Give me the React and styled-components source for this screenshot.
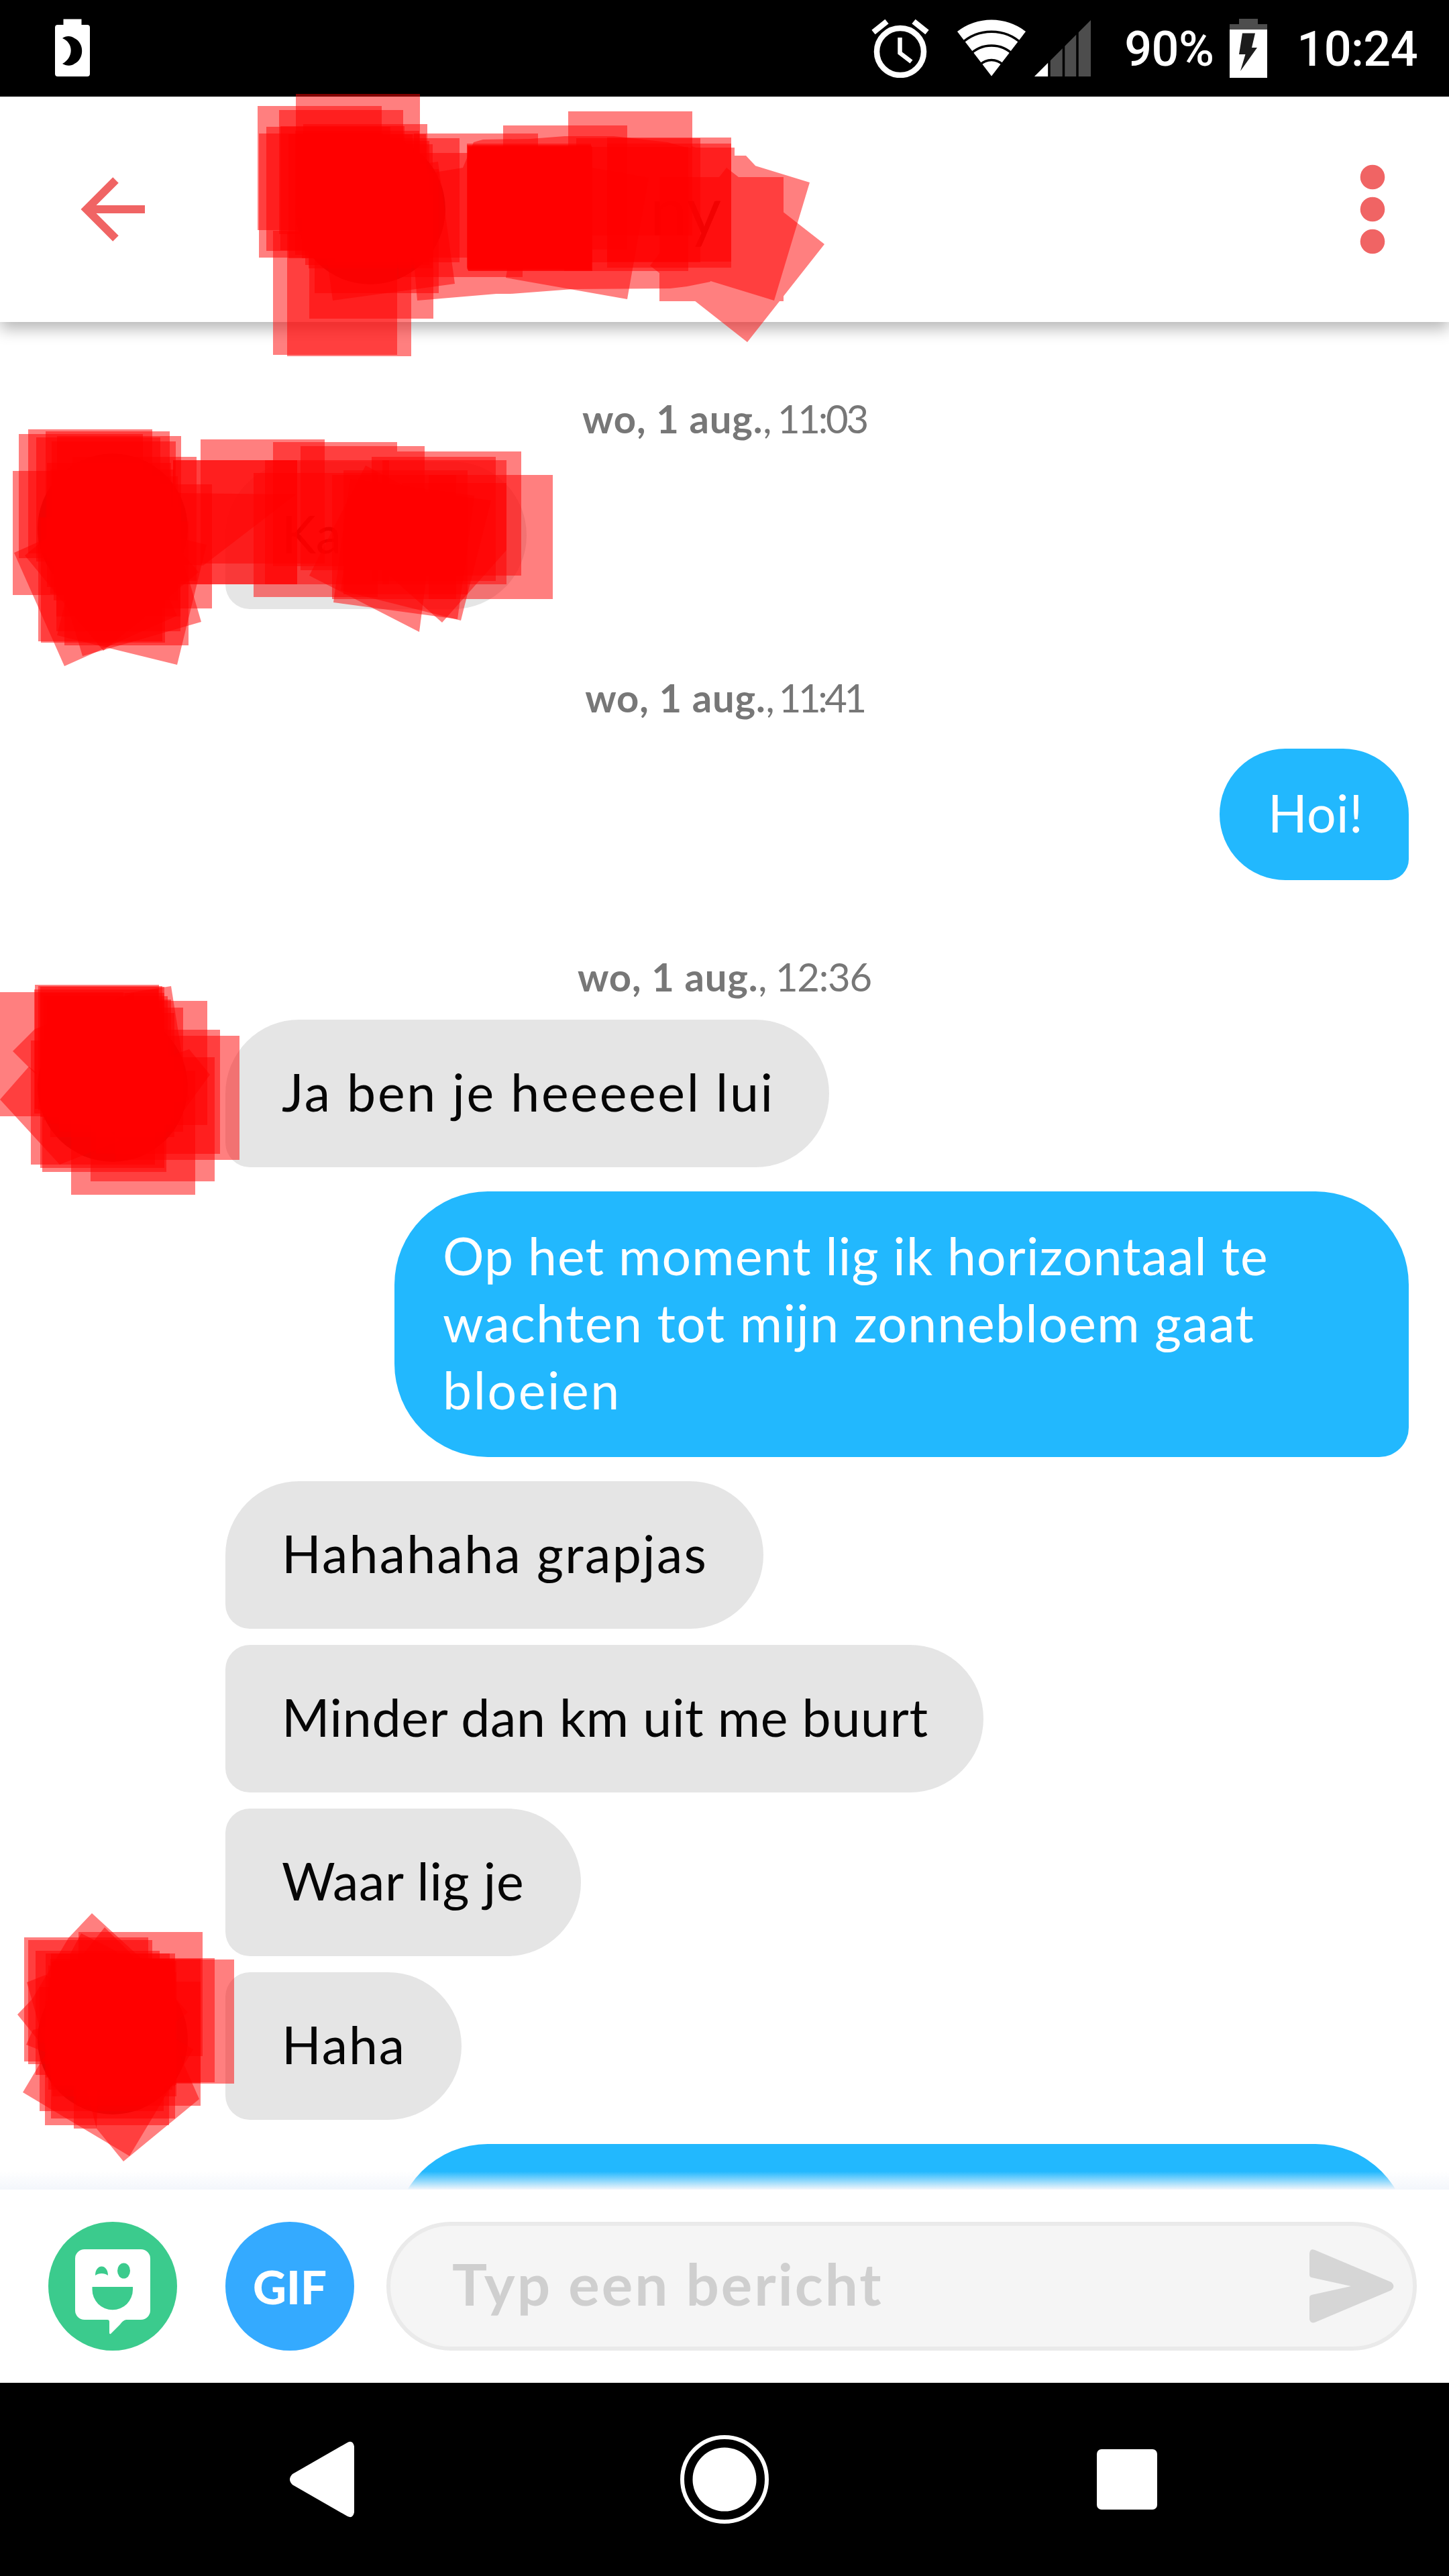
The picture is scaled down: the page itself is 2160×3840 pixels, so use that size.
import React from 'react';
import styled, { createGlobalStyle } from 'styled-components';

const GlobalStyle = createGlobalStyle`
  * {
    box-sizing: border-box;
  }

  body {
    margin: 0;
    background: #fff;
    font-family: Lato, 'Open Sans', sans-serif;
  }
`;

const Screen = styled.div`
  position: relative;
  display: flex;
  flex-direction: column;
  width: 2160px;
  height: 3840px;
  overflow: hidden;
  background: #fff;
`;

const StatusBar = styled.div`
  display: flex;
  align-items: center;
  flex: none;
  height: 144px;
  padding: 0 47px 0 82px;
  background: #000;
  color: #fff;
  font-family: Roboto, sans-serif;
  font-size: 72px;
  font-weight: 500;
  line-height: 144px;
`;

const StatusIcon = styled.svg`
  display: block;
  flex: none;
  width: ${(p) => p.$w}px;
  height: 88px;
  margin-left: ${(p) => p.$left || 0}px;
`;

const StatusText = styled.span`
  margin-left: ${(p) => p.$left}px;
  padding-top: 3px;
  letter-spacing: -0.6px;
`;

const Spacer = styled.div`
  flex: 1;
`;

const Header = styled.header`
  display: flex;
  align-items: center;
  flex: none;
  height: 336px;
  padding: 0 95px 0 120px;
  background: #fff;
  box-shadow: 0 10px 22px rgba(0, 0, 0, 0.29);
  z-index: 1;
`;

const BackIcon = styled.svg`
  width: 96px;
  height: 96px;
  margin-right: 224px;
`;

const Avatar = styled.div`
  flex: none;
  width: 224px;
  height: 224px;
  border-radius: 50%;
  background: #4a3b36;
`;

const Name = styled.div`
  width: 411px;
  text-align: right;
  font-size: 100px;
  line-height: 120px;
  color: #222;
`;

const MenuIcon = styled.svg`
  width: 38px;
  height: 134px;
`;

const Messages = styled.main`
  position: relative;
  display: flex;
  flex-direction: column;
  flex: 1;
  gap: 24px;
  min-height: 0;
  padding-top: 36px;
  overflow: hidden;

  & > * {
    flex: none;
  }
`;

const Fade = styled.div`
  position: absolute;
  left: 0;
  right: 0;
  bottom: 0;
  height: 27px;
  background: linear-gradient(rgba(243, 246, 251, 0), #f3f6fb);
`;

const DateLine = styled.div`
  margin: 72px 0 4px;
  text-align: center;
  font-size: 58px;
  line-height: 72px;
  letter-spacing: ${(p) => p.$tracking}px;
  color: #777;

  b {
    letter-spacing: 0.8px;
  }
`;

const Row = styled.div`
  display: flex;
  align-items: flex-end;
  justify-content: ${(p) => (p.$sent ? 'flex-end' : 'flex-start')};
  padding: ${(p) => (p.$sent ? '12px 60px 12px 0' : '0')};
`;

const AvatarSlot = styled.div`
  display: flex;
  align-items: flex-end;
  width: 336px;
  height: 220px;
  padding: 0 56px 8px;
`;

const Bubble = styled.div`
  width: ${(p) => p.$w}px;
  font-size: 77px;
  line-height: 100px;
  letter-spacing: ${(p) => p.$tracking || 0}px;
  white-space: pre;
`;

const SentBubble = styled(Bubble)`
  padding: 45px 0 51px 72px;
  border-radius: 139px 139px 44px 139px;
  background: #22b8fe;
  color: #fff;
`;

const ReceivedBubble = styled(Bubble)`
  padding: 57px 0 63px 84px;
  border-radius: ${(p) => (p.$follow ? 46 : 139)}px 139px 139px 46px;
  background: #e5e5e5;
  color: #060606;
`;

const Line = styled.div`
  letter-spacing: ${(p) => p.$tracking}px;
`;

const Composer = styled.footer`
  display: flex;
  align-items: center;
  flex: none;
  height: 288px;
  padding: 0 48px 0 72px;
  background: #fff;
`;

const RoundButton = styled.div`
  display: flex;
  align-items: center;
  justify-content: center;
  width: 192px;
  height: 192px;
  margin-right: ${(p) => p.$gap}px;
  border-radius: 50%;
  background: ${(p) => p.$color};
  color: #fff;
  font-size: 69px;
  font-weight: 900;
`;

const InputBox = styled.div`
  display: flex;
  align-items: center;
  justify-content: space-between;
  flex: 1;
  height: 192px;
  padding: 0 28px 0 92px;
  border: 6px solid #eaeaea;
  border-radius: 96px;
  background: #f5f5f5;
`;

const Placeholder = styled.span`
  padding-bottom: 8px;
  font-size: 87px;
  font-weight: 700;
  line-height: 100px;
  letter-spacing: 3px;
  color: #cfcfcf;
`;

const NavBar = styled.nav`
  display: grid;
  grid-template-columns: repeat(3, 600px);
  justify-content: center;
  align-items: center;
  justify-items: center;
  flex: none;
  height: 288px;
  background: #000;
`;

const Scribbles = styled.svg`
  position: absolute;
  top: 0;
  left: 0;
  width: 2160px;
  height: 3840px;
  z-index: 2;
  pointer-events: none;
`;

// top left corners of the marker stamps
const STAMP = 185;

const stamps = [
  // header
  [441, 140], [384, 158], [416, 164], [397, 189], [386, 199], [418, 188], [452, 185],
  [407, 344], [428, 346], [461, 290], [469, 252], [500, 206], [617, 199], [594, 228],
  [750, 187], [847, 166], [859, 206], [905, 205], [905, 214],
  [696, 214], [696, 216], [697, 217], [698, 219], [698, 219], [697, 218],
  [430, 200], [440, 195], [450, 200], [455, 210], [460, 215], [841, 219],
  // first bubble
  [42, 640], [68, 643], [28, 647], [85, 650], [54, 652], [77, 658], [19, 702],
  [108, 681], [131, 722], [258, 686], [258, 686], [299, 655], [407, 659], [448, 665],
  [592, 673], [554, 681], [570, 686], [395, 686], [378, 705], [512, 701], [495, 708],
  [639, 708], [57, 771], [61, 773], [84, 756], [84, 734], [96, 777],
  [70, 690], [75, 700], [80, 710],
  // "Ja ben je"
  [-1, 1479], [52, 1468], [57, 1470], [51, 1475], [60, 1471], [124, 1492], [143, 1535],
  [172, 1544], [135, 1576], [106, 1596], [63, 1562], [60, 1556], [88, 1502], [46, 1551],
  [60, 1480], [65, 1485], [70, 1490], [75, 1510],
  // "Haha"
  [36, 2888], [117, 2880], [135, 2919], [164, 2921], [53, 2908], [68, 2912], [76, 2912],
  [78, 2923], [114, 2954], [59, 2962], [67, 2983], [76, 2973], [42, 2892], [114, 2920],
  [75, 2920], [72, 2930], [78, 2940], [76, 2925],
];

// longer drags, every one a single flat shape
const drags = [
  'M606 264L690 250L706 212L720 208L790 207L842 203L915 203L995 212L1030 222L1059 420L1024 427L999 430L854 431L761 438L740 438L622 448z M1207 272L1154 448L978 394L1031 218z M910 220H1095V405H910z M1080 232H1112L1126 247V300H1080z',
  'M983 264H1168V449H983z M1229 364L1114 510L969 396L1083 250z',
];

const tilted = [
  '935,446 754,414 786,233 967,265',
  '496,448 678,423 653,241 471,266',
  '21,824 96,993 264,918 189,749',
  '264,991 85,947 129,768 308,812',
  '300,927 123,978 71,802 248,750',
  '37,828 154,970 296,853 179,712',
  '303,843 441,737 262,735 260,840',
  '625,942 461,858 545,694 650,750',
  '659,928 560,840 600,720 755,720 755,820',
  '687,925 508,880 530,720 732,746',
  '682,923 497,898 522,714 707,739',
  '0,1639 89,1736 180,1700 43,1590',
  '19,1567 52,1534 200,1480 200,1650 51,1599',
  '186,1481 255,1470 282,1640 150,1660',
  '313,1602 282,1564 180,1600 262,1672',
  '137,2852 102,2889 48,2980 26,3003 60,3045 200,3060 280,3000 210,2919',
  '156,2873 193,2910 250,3000 120,3050 70,2980',
  '121,2882 105,2912 100,3000 250,3000 172,2908',
  '40,2955 68,2944 160,3000 70,3060',
  '39,3048 49,3026 150,3000 120,3080',
  '34,3119 193,3214 288,3055 129,2960',
  '184,3222 297,3129 240,3000 120,3080 144,3173',
  '110,3173 144,3173 150,3000 110,3000',
];

const Redaction = () => (
  <Scribbles viewBox="0 0 2160 3840" fill="#f00" fillOpacity="0.5">
    {stamps.map(([x, y], i) => (
      <rect key={i} x={x} y={y} width={STAMP} height={STAMP} />
    ))}
    {drags.map((d) => (
      <path key={d} d={d} />
    ))}
    {tilted.map((points) => (
      <polygon key={points} points={points} />
    ))}
  </Scribbles>
);

const Status = () => (
  <StatusBar>
    <StatusIcon $w={52} viewBox="0 0 52 88">
      <path d="M12.500 0.500h27V9h8.500a4 4 0 0 1 4 4v69a4 4 0 0 1-4 4H4a4 4 0 0 1-4-4V13a4 4 0 0 1 4-4h8.500z" fill="#fff" />
      <path d="M11 29C16 25 24 25 29 29C44 36 44 60 29 67C24 71 16 70 11 67C28 58 28 36 11 29z" fill="#000" />
    </StatusIcon>
    <Spacer />
    <StatusIcon $w={86} viewBox="0 0 86 88" fill="none" stroke="#fff">
      <circle cx="43" cy="49" r="35" strokeWidth="8.500" />
      <path d="M42.500 28v23l17 13" strokeWidth="6.500" />
      <path d="M3 20L23 4M83 20L63 4" strokeWidth="8.500" />
    </StatusIcon>
    <StatusIcon $w={102} $left={42} viewBox="0 0 102 88">
      <path d="M51 85.500L0 19A83 83 0 0 1 102 19z" fill="#fff" />
      <path d="M5 38A66 66 0 0 1 97 38M18 54.500A45 45 0 0 1 84 54.500M34 68.500A24 24 0 0 1 68 68.500" fill="none" stroke="#000" strokeWidth="3.500" />
    </StatusIcon>
    <StatusIcon $w={84} $left={13} viewBox="0 0 84 88">
      <path d="M84 2V86H0z" fill="#4d4d4d" />
      <path d="M20.500 65.500V86H0z" fill="#fff" />
      <path d="M22 0V88M43.500 0V88M64 0V88" stroke="#000" strokeWidth="3.500" />
    </StatusIcon>
    <StatusText $left={50}>90%</StatusText>
    <StatusIcon $w={56} $left={24} viewBox="0 0 56 88">
      <path d="M14 0H42V8H56V20H0V8H14z" fill="#4d4d4d" />
      <path d="M0 16H56V88H0z" fill="#fff" />
      <path d="M19 21.500H38L33 43H41L16 78L23.500 53H14z" fill="#1c1c1c" />
    </StatusIcon>
    <StatusText $left={44}>10:24</StatusText>
  </StatusBar>
);

const App = () => {
  return (
    <>
      <GlobalStyle />
      <Screen>
        <Status />
        <Header>
          <BackIcon viewBox="0 0 96 96" fill="none" stroke="#f06464" strokeWidth="12">
            <path d="M96 48H10M52.500 4.500L9 48L52.500 91.500" />
          </BackIcon>
          <Avatar />
          <Name>ny</Name>
          <Spacer />
          <MenuIcon viewBox="0 0 38 134" fill="#f06464">
            <circle cx="19" cy="19" r="18.300" />
            <circle cx="19" cy="67" r="18.300" />
            <circle cx="19" cy="115" r="18.300" />
          </MenuIcon>
        </Header>

        <Messages>
          <DateLine $tracking={-3.2}><b>wo, 1 aug.</b>, 11:03</DateLine>
          <Row>
            <AvatarSlot><Avatar /></AvatarSlot>
            <ReceivedBubble $w={449}>Ka    xO</ReceivedBubble>
          </Row>

          <DateLine $tracking={-4.4}><b>wo, 1 aug.</b>, 11:41</DateLine>
          <Row $sent>
            <SentBubble $w={282} $tracking={0.4}>Hoi!</SentBubble>
          </Row>

          <DateLine $tracking={-1.2}><b>wo, 1 aug.</b>, 12:36</DateLine>
          <Row>
            <AvatarSlot><Avatar /></AvatarSlot>
            <ReceivedBubble $w={900} $tracking={2.7}>Ja ben je heeeeel lui</ReceivedBubble>
          </Row>
          <Row $sent>
            <SentBubble $w={1512}>
              <Line $tracking={1.1}>Op het moment lig ik horizontaal te</Line>
              <Line $tracking={1.4}>wachten tot mijn zonnebloem gaat</Line>
              <Line $tracking={2.6}>bloeien</Line>
            </SentBubble>
          </Row>
          <Row>
            <AvatarSlot />
            <ReceivedBubble $w={802} $tracking={2.3}>Hahahaha grapjas</ReceivedBubble>
          </Row>
          <Row>
            <AvatarSlot />
            <ReceivedBubble $w={1130} $tracking={0.7} $follow>Minder dan km uit me buurt</ReceivedBubble>
          </Row>
          <Row>
            <AvatarSlot />
            <ReceivedBubble $w={530} $tracking={0.7} $follow>Waar lig je</ReceivedBubble>
          </Row>
          <Row>
            <AvatarSlot><Avatar /></AvatarSlot>
            <ReceivedBubble $w={352} $tracking={2} $follow>Haha</ReceivedBubble>
          </Row>
          <Row $sent>
            <SentBubble $w={1512}>{' \n \n '}</SentBubble>
          </Row>
          <Fade />
        </Messages>

        <Composer>
          <RoundButton $color="#3bcb8d" $gap={72}>
            <svg width="192" height="192" viewBox="0 0 192 192">
              <path d="M54 41H138a14 14 0 0 1 14 14V132a14 14 0 0 1-14 14H116Q111 147 107 153L93 167Q91 168 91 165V149Q91 146 88 146H54a14 14 0 0 1-14-14V55a14 14 0 0 1 14-14z" fill="#fff" />
              <path d="M65.500 97H126V101a30 30 0 0 1-60.500 0z" fill="#3bcb8d" />
              <ellipse cx="112.500" cy="73" rx="9.500" ry="11.500" fill="#3bcb8d" />
              <path d="M70 80C70 62 89 62 89 80C84 76 75 76 70 80z" fill="#3bcb8d" />
            </svg>
          </RoundButton>
          <RoundButton $color="#34aaff" $gap={48}>GIF</RoundButton>
          <InputBox>
            <Placeholder>Typ een bericht</Placeholder>
            <svg width="126" height="112" viewBox="0 0 126 112" fill="#d6d6d6">
              <path d="M0 7Q1 -1 8 2L122 50Q129 56 122 62L8 110Q1 112 0 105V73Q0 70 3 69L62 56L3 43Q0 42 0 39z" />
            </svg>
          </InputBox>
        </Composer>

        <NavBar>
          <svg width="96" height="114" viewBox="0 0 96 114" fill="#fff">
            <path d="M96 8V106Q94 116 86 112L4 65Q-4 57 4 49L86 2Q94 -2 96 8z" />
          </svg>
          <svg width="132" height="132" viewBox="0 0 132 132" fill="#fff">
            <circle cx="66" cy="66" r="63" fill="none" stroke="#fff" strokeWidth="6" />
            <circle cx="66" cy="66" r="47.500" />
          </svg>
          <svg width="90" height="90" viewBox="0 0 90 90" fill="#fff">
            <rect width="90" height="90" rx="7" />
          </svg>
        </NavBar>
        <Redaction />
      </Screen>
    </>
  );
};

export default App;
